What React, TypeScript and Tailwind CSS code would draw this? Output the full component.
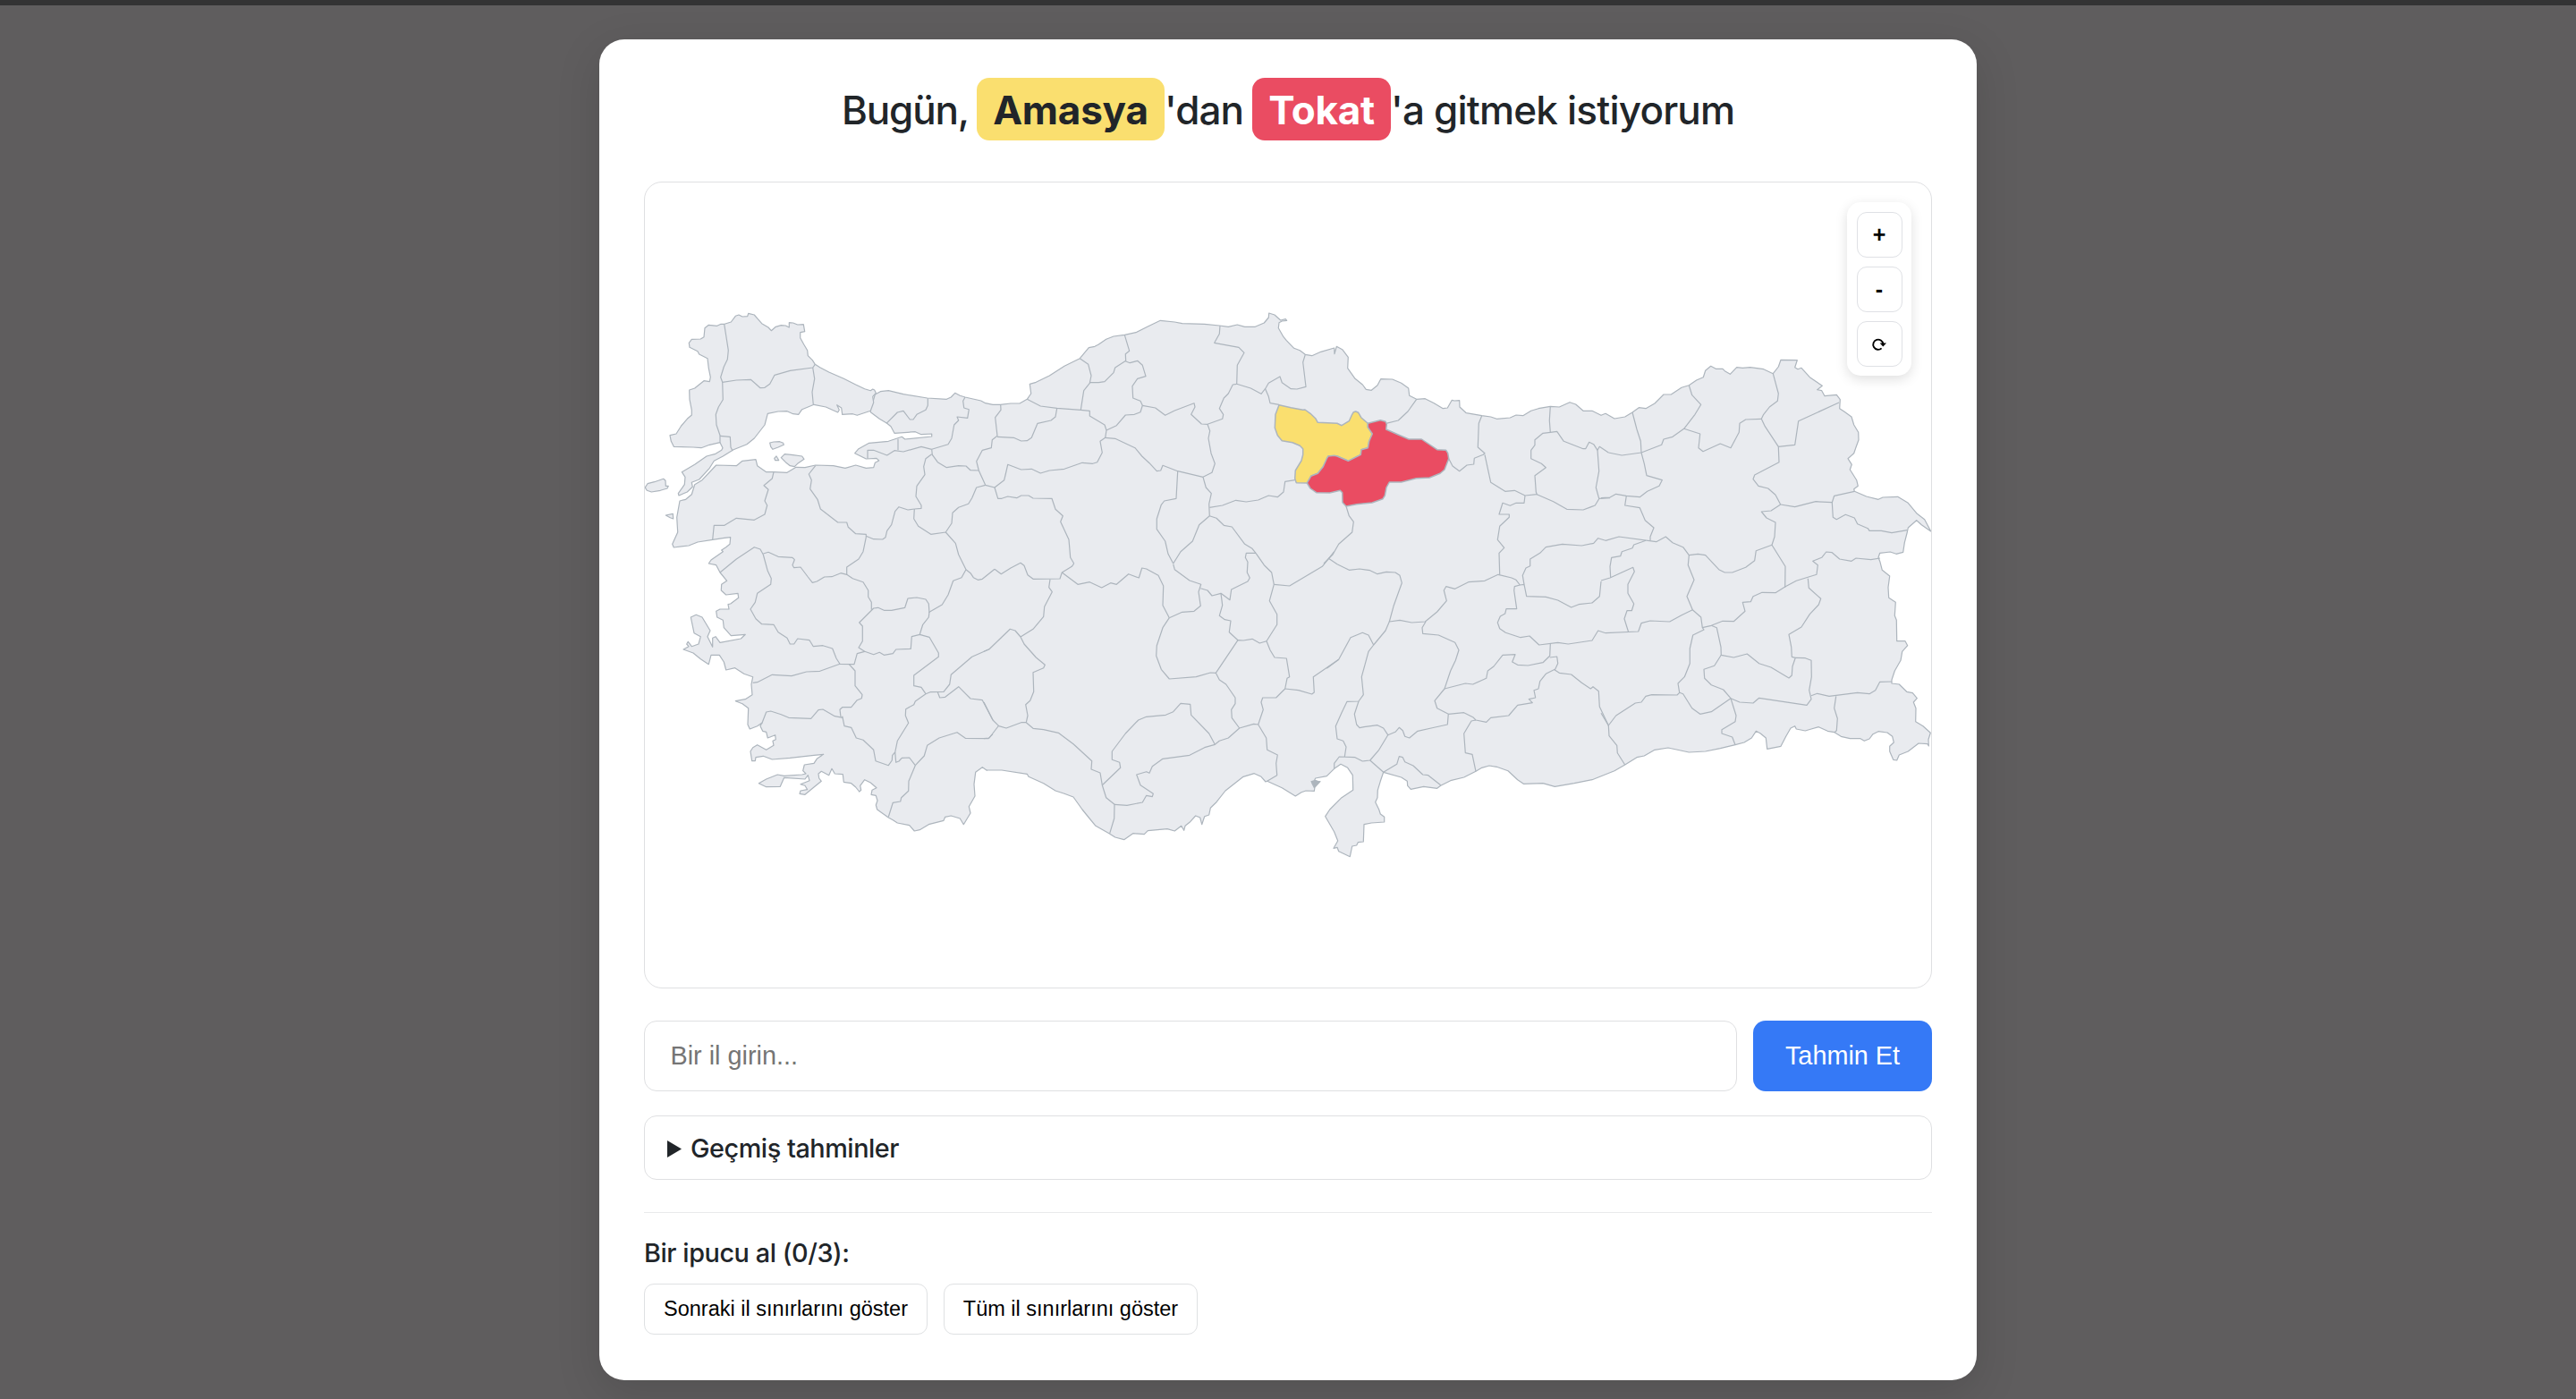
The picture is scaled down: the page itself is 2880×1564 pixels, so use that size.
type Origin = [number, number];
const A: Origin = [710, 330];
const B: Origin = [1100, 330];
const C: Origin = [1400, 330];
const D: Origin = [1790, 380];
const E: Origin = [710, 610];
const F: Origin = [1100, 610];
const G: Origin = [1400, 610];
const H: Origin = [1790, 600];

// Map sheets store coordinates in thirds of a pixel from their own origin.
const pts = (o: Origin, s: string) =>
  s
    .trim()
    .split(/\s+/)
    .map((p) => {
      const [x, y] = p.split(",").map(Number);
      return `${(o[0] + x / 3).toFixed(1)},${(o[1] + y / 3).toFixed(1)}`;
    })
    .join(" ");

const thrace = pts(
  A,
  "803,318 797,315 790,320 770,314 740,300 700,280 650,258 620,242 604,232 595,218 580,203 578,185 566,165 554,143 554,125 569,122 565,98 545,99 530,93 517,92 517,108 505,102 490,101 472,106 457,119 447,108 425,95 412,80 400,66 380,61 377,71 360,72 348,66 337,70 322,90 300,97 288,97 275,103 247,100 234,110 231,140 220,147 190,148 181,160 183,175 210,188 215,198 243,212 247,245 253,275 250,290 231,287 200,312 182,318 183,350 190,385 190,402 175,415 155,438 138,465 117,470 121,490 130,508 195,510 222,512 250,502 285,494 294,512 290,520 270,532 240,540 200,568 157,593 168,610 166,635 145,665 147,672 175,660 193,643 190,628 215,618 250,580 265,556 295,540 330,518 375,500 400,480 435,435 445,397 480,390 510,389 530,398 548,400 560,383 600,367 640,375 680,393 685,385 677,368 692,378 695,400 730,398 745,403 790,388 800,360 797,340 808,328"
);

const anatolia = [
  pts(A, "805,333 823,323 850,320 900,332 980,345 1045,349 1060,342 1073,328 1090,337 1107,342 1160,354 1175,362 1200,367"),
  pts(B, "55,367 90,363 120,363 145,349 158,330 154,298 175,292 220,270 270,238 322,212 352,176 372,172 385,165 410,148 435,138 472,133 510,125 550,105 592,85 640,90 665,95 740,97 790,102 820,106 850,99 875,106 910,106 940,93 955,75 956,60 975,66 995,84 1012,80 1016,85 1000,87 990,92 988,110 1005,140 1015,152 1040,178 1060,185 1078,199"),
  pts(C, "200,203 230,190 275,177 276,197 283,172 302,182 322,208 320,245 345,280 370,300 382,316 400,319 420,302 431,281 470,282 500,295 524,312 527,337 551,349 580,347 610,362 640,380 655,378 670,352 678,354 695,353 696,375 718,395 770,404 800,408 820,415 865,411 885,402 908,404 935,388 960,380 1000,373 1030,375 1065,359 1085,366 1110,388 1140,388 1170,403"),
  pts(D, "15,247 45,264 80,258 105,243 127,227 150,230 180,213 210,183 235,183 270,160 295,152 320,135 343,125 350,103 368,88 385,97 408,97 415,104 433,115 455,92 475,94 500,92 545,98 577,113 595,90 603,67 658,68 650,92 660,98 672,94 700,125 742,154 725,167 740,170 750,188 790,184 802,200 800,230 815,240 840,258 848,285 863,310 864,335 855,360 848,380 828,398 841,418 835,435 857,470 862,490 848,500 850,508 890,525 930,535 945,528 995,526 1030,547 1060,583 1085,602 1106,642 1075,620 1058,605 1030,630 1027,645 1018,680 1013,712 990,718 970,711 935,715 930,730 936,745 943,772 968,792 963,830 965,865 988,880"),
  pts(H, "985,265 991,280 992,350 1020,350 1028,365 1010,385 1005,415 985,450 975,480 975,492 1000,495 1025,520 1045,524 1060,542 1048,555 1056,575 1055,620 1080,635 1105,658 1098,680 1099,702 1095,695 1065,693 1030,720 1000,732 992,750 980,748 968,720 968,703 982,690 977,670 960,657 930,653 912,662 900,678 883,685 870,677 835,677 805,670 783,656 760,652 730,638 705,645 685,651 655,645 650,635 636,642 620,670 603,703 557,712 553,675 535,660 520,652 505,675 480,690 450,698 400,710 350,720 295,723 225,708 180,715 145,735 120,740 80,765 45,785 0,803"),
  pts(G, "1140,785 1080,797 1015,808 975,797 910,799 890,785 858,755 820,742 795,738 770,745 750,757 710,777 665,788 632,805 620,814 575,808 532,817 521,805 520,790 500,777 440,760 430,790 421,820 420,845 413,860 425,885 430,900 443,910 443,927 400,930 375,935 373,993 355,995 350,1005 335,1008 328,1043 290,1025 285,1012 273,1015 287,990 275,960 245,908 260,885 300,845 338,820 337,770 320,745 297,733 275,748 250,773 212,780 205,795 228,791 210,810 208,823 180,822 165,827 145,840 100,812 50,790"),
  pts(F, "945,792 930,775 907,764 870,775 810,822 780,860 760,880 755,903 740,908 731,935 725,912 710,906 690,928 675,940 671,955 662,940 640,957 615,950 550,956 538,968 500,965 470,986 440,978 420,965 375,940 352,912 330,885 300,843 270,832 240,822 200,797 150,775 145,766 60,753 10,753"),
  pts(E, "1180,754 1165,743 1142,760 1137,800 1140,840 1120,875 1125,897 1102,935 1090,915 1060,906 1040,910 1035,922 985,935 955,953 937,957 920,938 880,930 865,920 850,912 812,885 808,870 813,855 808,838 792,835 795,820 810,812 790,795 770,785 755,805 758,820 752,825 740,810 725,797 700,793 697,767 670,765 660,748 650,770 625,757 615,765 617,780 625,790 600,810 570,835 552,832 555,822 578,818 570,805 555,800 585,788 580,770 570,783 500,778 487,808 440,809 415,797 440,783 478,768 500,772 560,768 573,765 563,755 568,735 600,730 610,715 632,700 600,703 520,712 460,717 430,706 405,710 403,722 392,722 387,690 395,677 410,668 440,685 465,670 462,655 472,650 470,635 445,645 440,625 428,622 420,605 425,595 410,605 385,615 378,600 380,545 360,530 337,521 370,515 393,500 390,465 395,440 365,430 335,410 305,417 298,390 283,367 255,367 247,398 220,380 195,360 162,348 180,338 173,330 178,322 190,338 213,330 220,305 198,293 187,240 205,232 225,240 252,285 243,305 260,340 260,310 270,305 285,325 355,312 370,298 322,302 298,275 295,250 275,240 272,220 285,213 315,213 312,197 320,195 347,175 345,160 305,165 289,150 290,130 308,118 285,90 272,65 247,60 255,48 295,20"),
  pts(A, "290,855 305,845 318,835 320,812 300,814 260,820 210,828 180,840 130,846 125,835 143,795 140,745 150,690 170,685 190,668 200,635 225,620 272,570 340,572 360,556 405,551 410,572 440,593 465,593 510,595 540,577 570,578 605,570 665,572 705,580 740,570 775,580 800,578 805,562 818,555 810,547 775,549 737,530 750,515 785,496 850,490 895,475 905,483 995,474 995,465 960,467 940,458 870,463 858,440 845,430 820,415 790,392 790,380 800,350"),
].join(" ");

const islands = [
  "34,645 42,632 65,626 95,616 102,622 103,640 112,640 108,648 85,655 55,660 40,655",
  "103,738 127,733 128,750 118,746",
  "452,495 465,492 485,491 497,496 499,502 480,510 462,517 455,508",
  "467,547 474,540 479,548 482,554 470,554",
  "490,545 502,533 530,536 560,540 567,550 545,565 535,575 520,572 505,560",
].map((s) => pts(A, s));

const amasya = pts(
  C,
  "90,368 130,377 170,385 177,384 195,397 212,413 220,427 285,430 300,437 325,422 335,400 340,392 347,390 356,394 365,410 388,430 388,443 403,465 392,490 388,512 366,518 364,535 322,556 285,540 255,540 238,575 220,598 197,607 184,630 148,629 143,615 145,588 165,555 170,535 170,515 160,505 135,494 100,488 85,470 76,445 78,400"
);
const tokat = pts(
  C,
  "388,430 430,419 447,424 451,433 449,450 490,468 525,483 568,483 620,518 650,520 656,530 659,548 645,585 630,598 595,612 550,614 500,627 460,627 450,645 445,672 438,683 402,696 350,701 315,708 303,695 302,662 295,655 260,663 215,662 195,648 184,630 197,607 220,598 238,575 250,548 255,540 275,538 285,540 322,556 364,535 366,518 388,512 392,490 403,465 388,443"
);

const borders: [Origin, string[]][] = [
  [A, [
    "299,97 305,135 313,185 310,215 298,240 287,275 293,292 295,350 280,375 271,400 273,435 285,470 285,494",
    "293,292 340,285 388,283 405,298 420,311 435,310 452,298 468,268 520,253 596,243 604,232",
    "596,243 602,280 594,325 598,367",
    "285,472 319,475 321,510 327,522",
    "982,346 982,370 975,385 945,400 933,417 922,417 900,388 880,393 843,430",
    "1107,342 1100,355 1103,378 1120,383 1115,412 1080,408 1085,420 1070,435 1062,480 1050,500 995,517",
    "882,482 882,520",
    "780,548 780,520 800,520 845,537 870,521 900,525 960,508 995,517",
    "995,517 997,535 1015,560 1045,578 1085,572 1110,573 1125,587 1153,588",
    "1175,637 1145,645 1130,680 1118,700 1085,712 1065,730 1062,765 1042,795",
    "995,533 975,548 968,575 972,602 945,640 942,675 960,705 960,715 937,717",
    "937,717 915,720 885,710 872,725 860,770 845,790 840,812 830,819 800,818 775,808",
    "937,717 935,750 950,775 992,802 1042,795 1075,832 1085,870 1110,920",
    "605,572 583,600 592,620 587,650 612,685 622,717 680,762 710,762 715,778 740,800 775,802 775,812 765,860 750,885 710,912 710,937",
    "465,593 460,615 432,638 447,652 435,690 443,705 435,735 400,754 340,748 300,772 265,772 260,820",
  ]],
  [E, [
    "285,90 340,45 400,5 420,12 430,30 445,85 457,110 455,130 410,160 403,190 387,213 405,245 425,263 465,265 480,290 510,310 520,330 533,330 545,312 585,317 598,338 630,335 662,345 675,378 687,397 735,398 745,362 770,355 750,342 763,320 763,270 752,258 800,210 815,208 835,217 860,217 905,208 915,177 945,174 975,180 985,195 987,225",
    "430,27 447,22 480,37 528,40 535,47 528,65 533,74 555,72 580,105 595,124 610,120 635,105 660,104 690,92 710,97 730,110 765,122 782,150 782,172 793,190 793,215",
    "1110,80 1095,107 1067,118 1050,165 1030,198 987,223 985,240 965,265 955,298",
    "1110,80 1125,92 1135,107 1150,115 1165,112 1206,79",
    "770,355 800,365 820,358 835,367 865,362 875,348 925,346 928,305 955,298 987,307 1018,360 1018,373 935,435 935,470 960,475 975,497",
    "718,398 738,420 738,470 762,500 760,512 745,518 725,542 695,542 687,550 690,575",
    "395,460 410,458 460,433 525,437 575,423 620,421 687,397",
    "425,597 440,558 455,555 490,566 515,577 590,580 615,551 630,549 670,572 697,577",
    "695,572 702,605 725,610 742,645 765,652 800,685 807,722 850,737 862,720 863,703 872,693 880,655 917,595 907,570 908,548 935,533 940,522 975,497 990,491 1035,490 1055,465 1060,433 1130,373 1188,347",
    "872,693 875,727 885,723 895,712 920,711 940,737 918,790 917,823 893,845 890,858 865,862 850,910",
    "1015,491 1022,510 1040,508 1085,473 1125,513 1165,518 1200,585",
    "940,737 970,705 980,670 1020,645 1080,626 1108,646 1185,647 1200,632",
  ]],
  [B, [
    "56,367 57,385 38,410 45,472 28,485 25,512 -5,520 -25,557 -17,588 5,637 36,645",
    "145,349 190,372 245,379 325,385 355,388 355,405 405,435 411,453 407,478 390,490 397,528 380,560 365,565 330,562 270,583 220,588 190,597 160,583 125,585 80,568 73,600 68,620 36,645 47,682 60,682 80,675 110,680 125,672 150,672 165,681 228,682 240,718 265,740 257,760 285,820 290,880 302,900",
    "245,379 240,408 225,420 180,430 160,478 145,488 125,489 100,478 45,475",
    "322,212 350,232 360,270 355,295 335,320 325,385",
    "355,293 385,293 405,290 435,260 440,243 476,220",
    "472,133 488,187 475,197 476,222 490,227 515,220 532,235 543,272 515,280 498,305 500,345 525,355 532,370 525,392 505,400 475,402 445,437 411,453",
    "532,370 575,378 608,403 640,387 705,362 708,375 695,400 730,432 750,433 800,415 803,400 790,380 805,345 820,330 835,300 848,298",
    "792,102 790,130 773,160 855,175 873,193 850,235 848,298 895,312 930,331 945,312 955,295 993,273 1000,293 1030,314 1050,315 1080,307 1070,225 1078,199",
    "943,312 955,340 960,362 990,367",
    "407,478 440,481 507,512 530,540 555,563 580,590 593,588 600,571 650,590 735,610 765,595 775,565 762,530 753,480 758,455 750,433",
    "650,590 645,682 605,690 595,703 580,750 580,785 608,825 618,868 635,900",
    "735,610 745,645 763,665 755,700 757,740 722,770 700,825 660,860 635,900",
    "757,712 800,705 845,688 880,693 920,687 955,672 985,677 1005,660 1010,625 1043,620",
    "757,740 780,748 805,772 832,777 875,835 900,850 912,865",
  ]],
  [F, [
    "36,79 58,95 90,75 123,58 135,67 147,98 165,112 255,111 262,90 295,70 302,60",
    "262,90 315,130 355,122 395,141 425,125 445,130 485,95 520,108 530,75 545,78 585,100 602,135 600,200 622,242",
    "222,113 218,140 229,155 203,205 200,238 165,280 123,306",
    "0,355 18,347 88,280 105,285 123,306 135,330 175,375 205,400 200,410 165,425 167,490 155,520 140,533 147,570 142,593",
    "0,525 30,585 50,605 75,612 125,593 142,593 165,613 200,617 250,628 300,665 362,722 360,750 390,762 397,803 410,845 438,868 437,915 422,965",
    "50,603 18,645 0,647",
    "397,803 458,745 455,727 430,718 430,690 475,630 518,585 545,574 610,568 635,557 660,529 692,532 695,568 755,630 775,667",
    "438,868 480,871 532,861 545,838 565,842 568,832 525,803 512,768 545,758 555,763 565,740 600,715 690,703 740,677 775,667 790,655 820,645 857,612",
    "622,242 600,275 580,335 578,370 595,415 622,447 712,440 760,426 778,427 852,317 870,318 900,313 925,327 948,320",
    "622,242 665,223 705,220 727,202 720,155 728,130 690,117 640,80 635,62",
    "727,143 750,150 765,168 795,160 825,182 830,147 885,120 892,108 883,90 885,55 877,40 880,25 912,25",
    "795,160 800,200 790,235 808,248 828,252 823,290 852,317",
    "912,25 940,65 965,90 973,130 958,185 983,230 983,265 948,320 960,350 975,375 1015,378 1025,440 1017,445 1010,480 980,510 935,510 930,525 937,550 920,600",
    "973,130 1025,135 1135,70 1175,20",
    "778,427 790,450 812,465 843,510 843,530 830,550 832,578 857,612 905,598 920,600 947,645 950,685 985,702 980,730 983,770 950,790",
    "1010,480 1055,485 1100,498 1108,492 1105,440 1190,382",
  ]],
  [C, [
    "449,430 490,420 522,390 551,349",
    "315,708 325,740 340,760 335,795 290,835 270,870 240,900",
    "659,548 672,573 695,590 720,570 743,567 745,547 775,535 780,530 757,510 760,430 770,404",
    "780,535 800,628 848,658 880,655 915,672 955,668 952,660 948,605 985,578 970,565 935,548 935,520 948,503 948,485 975,463 1000,460",
    "1000,373 997,420 1000,460 1022,457 1045,490 1110,515 1118,515 1130,493 1145,500 1158,520 1165,508 1195,528",
    "1158,520 1163,590 1153,645 1163,682 1200,680",
    "955,668 1010,692 1055,718 1110,720 1150,705 1163,683",
    "915,672 912,697 885,697 865,706 840,697 828,735 862,735 862,745 830,775 823,820 845,847 828,865 830,937",
    "912,970 907,940 918,915 932,908 932,885 965,865 985,845 1040,835 1105,840 1145,832 1160,815 1185,823",
  ]],
  [D, [
    "25,378 70,387 135,378 203,352 210,333 240,325 278,298 315,250 335,217 305,185 295,152",
    "105,243 120,300 133,340 135,378 145,415 153,455 205,470 195,490 155,508 130,527 85,523 50,517 30,528 0,530",
    "85,523 80,555 130,563 148,605 177,630 165,660 165,673",
    "278,298 332,315 327,362 342,374 400,348 435,362 463,310 465,280 485,267 538,265",
    "577,113 595,180 592,205 565,225 545,250 538,265 550,290 595,358 597,410 515,453 510,467 528,490 560,498 585,520 602,552",
    "595,358 650,352 662,272 798,210",
    "602,552 650,560 720,542 775,545 782,523 850,508",
    "775,545 778,595 790,602 820,586 850,597 860,617 895,632 900,640 940,640 975,647 1027,638",
    "602,552 570,573 538,576 555,597 585,612 582,660 573,688 618,760 617,830",
    "573,688 520,707 515,740 485,763 440,780 415,780 395,770 350,722 325,718 295,722 275,695 240,680 217,660 185,677 60,660 15,673",
  ]],
  [H, [
    "150,13 110,27 105,38 70,50 65,65 35,70 30,100 32,138",
    "0,147 30,138 107,103 112,117 90,160 90,190 110,225 103,248 87,248 78,275 92,320",
    "295,63 292,95 312,145 288,200 307,245 335,270 340,305 345,312 308,330 298,375 298,425 280,470 258,492 263,523",
    "307,245 270,263 230,285 165,282 135,290 125,318 15,323",
    "340,305 370,298 408,283 445,284 483,250 475,220 502,218 510,200 540,187 585,188 617,168 655,148 723,127 727,95 710,82 740,70 755,51 775,53 800,75 840,82 855,72 905,77 936,72",
    "694,140 697,172 737,208 730,228 700,260 672,303 630,328 638,370 640,403 652,406 642,435 640,465 630,474 570,438 530,425 490,393 445,405 403,397 402,370 388,305 370,298",
    "403,397 380,433 345,445 347,475 370,497 410,513 435,542 465,555 510,558 530,541 690,565 705,545 698,515 706,470 705,415 685,407 652,406",
    "705,533 725,526 765,535 860,523 900,527 920,515 935,487 975,486",
    "788,535 782,575 793,610 790,650 783,656",
    "435,542 453,600 450,620 405,647 405,660 440,672 450,698",
    "435,542 370,587 332,595 305,575 275,527 263,523 255,531 170,530 150,535 135,555 115,558 50,600 25,633 0,592",
    "25,633 27,668 53,700 55,725 80,765",
  ]],
  [G, [
    "255,42 285,62 325,82 360,78 395,83 420,95 450,88 480,90 495,100 502,125 475,200 460,255 495,250 535,258 580,255 620,222 652,185 643,150 650,137 680,145 725,122 780,118 825,97 870,108 885,115 898,132 912,130 920,170 985,172 1025,183 1070,207 1095,197 1140,192 1165,170 1170,120",
    "898,132 880,137 878,150 887,212 852,212 848,228 832,237 823,258 830,278 850,292 900,308 930,303 962,333 1025,325 1060,330 1140,318 1160,285 1185,293",
    "460,255 447,285 407,333 390,355 367,440 373,500 357,522 318,523 300,560 280,605 285,648 305,655 315,675 310,708",
    "407,333 390,300 370,292 330,308 290,382 250,412",
    "357,522 343,565 350,600 360,611 375,608 420,602 440,612 455,635 425,685 395,720 370,723 345,710 292,708 275,730 275,748",
    "395,720 440,760",
    "455,635 480,625 493,610 505,620 512,640 527,645 555,622 600,612 655,600 658,565 620,545 612,520 645,480 665,420 682,385 693,350 680,325 625,300 572,295 570,275 582,255",
    "440,760 485,733 493,707 505,710 512,725 540,738 572,768 590,770 632,803",
    "658,565 710,560 740,575 750,585 785,592 800,577 860,570 890,535 940,527 928,515 950,510 945,485 960,480 965,455 985,430 1015,415",
    "645,480 715,462 740,465 785,445 790,420 810,405 840,367 882,365 872,390 890,400 925,402 975,392 998,370 1000,330",
    "998,375 1022,372 1025,395 1015,417 1030,427 1070,432 1105,460 1135,480 1143,473 1162,488 1165,540 1195,603",
    "750,585 735,588 710,630 715,695 738,700 750,757",
  ]],
];

function TurkeyMap() {
  return (
    <svg className="block size-full" viewBox="721 204 1438 900" fill="none" strokeWidth="1.2" strokeLinejoin="round">
      <g fill="#e9ebef" stroke="#adb5bd">
        <polygon points={anatolia} />
        <polygon points={thrace} />
        {islands.map((p) => (
          <polygon key={p} points={p} />
        ))}
      </g>
      <g stroke="#adb5bd">
        {borders.flatMap(([o, lines]) => lines.map((l) => <polyline key={o[0] + l} points={pts(o, l)} />))}
      </g>
      <polygon points={amasya} fill="#fadf6f" stroke="#adb5bd" strokeWidth="1.5" />
      <polygon points={tokat} fill="#ea4c62" stroke="#adb5bd" strokeWidth="1.5" />
      <polygon points={pts(G, "196,790 212,785 228,791 214,805 208,815 200,800")} fill="#adb5bd" />
    </svg>
  );
}

const zoomButton =
  "flex size-[51px] items-center justify-center rounded-[11px] border border-[#dfe1e5] bg-white font-['Liberation_Sans',sans-serif] text-[25px] leading-none font-bold text-black";
const hintButton =
  "flex h-[57px] items-center justify-center rounded-[11px] border border-[#dfe1e3] bg-white pt-px font-['Liberation_Sans',sans-serif] text-[23.5px] text-black";

export default function App() {
  return (
    <div className="flex h-[1564px] flex-col items-center overflow-hidden bg-[#5f5d5e] font-[Inter,sans-serif] text-[#212529]">
      <div className="h-1.5 w-full shrink-0 bg-[#333334]" />
      <main className="mt-[38px] flex h-[1499px] w-[1540px] shrink-0 flex-col rounded-[28px] bg-white px-[50px] pt-[43px] shadow-[0_14px_50px_rgba(0,0,0,0.13)]">
        <h1 className="flex h-[70px] items-center justify-center text-[44px] font-medium whitespace-pre">
          <span className="w-[151px] pt-0.5 tracking-[-1.15px]">Bugün, </span>
          <span className="flex h-full w-[210px] items-center justify-center rounded-[14px] bg-[#fadf6f] pt-0.5 font-bold tracking-[-0.2px]">Amasya</span>
          <span className="w-[98px] pt-0.5 tracking-[-0.9px]">'dan </span>
          <span className="flex h-full w-[155px] items-center justify-center rounded-[14px] bg-[#ea4c62] pt-0.5 font-bold tracking-[-0.3px] text-white">Tokat</span>
          <span className="w-[384px] pt-0.5 tracking-[-0.8px]">'a gitmek istiyorum</span>
        </h1>

        <section className="relative mt-[46px] h-[902px] shrink-0 overflow-hidden rounded-[20px] border border-[#dfe0e2]">
          <TurkeyMap />
          <div className="absolute top-[22px] right-[22px] flex h-[194px] w-[72px] flex-col items-center justify-center gap-[10px] rounded-[15px] bg-white shadow-[0_4px_14px_rgba(0,0,0,0.13)]">
            <button className={zoomButton}>+</button>
            <button className={zoomButton}>-</button>
            <button className={zoomButton}>
              <svg className="mt-0.5 size-[18px]" viewBox="0 0 18 18" fill="none" stroke="#000" strokeWidth="1.9">
                <path d="M11.6 13.4A5.6 5.6 0 1 1 13.4 8.6" />
                <path d="M9.6 7.6H17L13.3 11.4Z" fill="#000" stroke="none" />
              </svg>
            </button>
          </div>
        </section>

        <form className="mt-9 flex h-[79px] shrink-0 gap-[18px] font-['Liberation_Sans',sans-serif] text-[28.8px]">
          <input
            className="min-w-0 flex-1 rounded-[14px] border border-[#dfe0e2] px-[28.5px] placeholder:text-[#757575]"
            placeholder="Bir il girin..."
          />
          <button type="button" className="w-[200px] rounded-[14px] bg-[#3579f6] text-white">Tahmin Et</button>
        </form>

        <div className="mt-[27px] flex h-[72px] shrink-0 items-center rounded-[14px] border border-[#dfe0e2] pt-0.5 pl-[25px] text-[28.8px] font-medium">
          <svg className="h-[19px] w-4" viewBox="0 0 16 19"><path d="M0 0L16 9.5L0 19Z" fill="#212529" /></svg>
          <span className="ml-[10px] tracking-[-0.45px]">Geçmiş tahminler</span>
        </div>

        <div className="mt-9 border-t border-[#e9eaeb] pt-7">
          <p className="text-[28.8px] leading-[34px] font-medium tracking-[-0.42px]">Bir ipucu al (0/3):</p>
          <div className="mt-[17px] flex gap-[18px]">
            <button className={hintButton + " w-[317px]"}>Sonraki il sınırlarını göster</button>
            <button className={hintButton + " w-[284px]"}>Tüm il sınırlarını göster</button>
          </div>
        </div>
      </main>
    </div>
  );
}
